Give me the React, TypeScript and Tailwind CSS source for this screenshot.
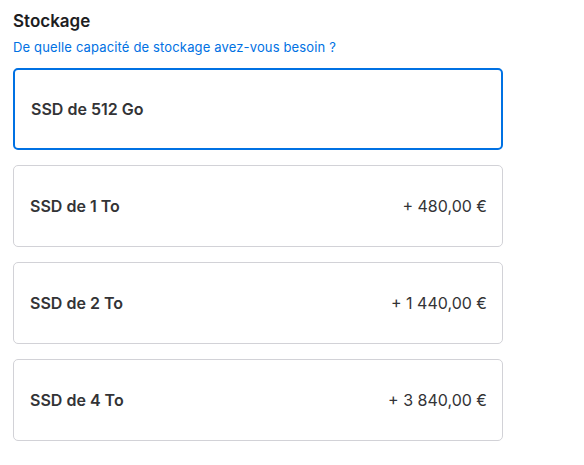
import React from 'react';

interface StorageOption {
  label: string;
  price?: string;
}

const options: StorageOption[] = [
  { label: 'SSD de 512 Go' },
  { label: 'SSD de 1 To', price: '+ 480,00 €' },
  { label: 'SSD de 2 To', price: '+ 1 440,00 €' },
  { label: 'SSD de 4 To', price: '+ 3 840,00 €' },
];

const App: React.FC = () => {
  const selected = 0;

  return (
    <div className="min-h-[465px] w-[584px] bg-white pl-[13px] pt-[10px] font-['Inter','Liberation_Sans',sans-serif] text-[#333336]">
      {/* Header */}
      <h2 className="text-[17px] leading-[22px] font-semibold text-[#1d1d1f]">Stockage</h2>
      <p className="mt-[7px] text-[13px] leading-[16px] tracking-[0.15px] text-[#0071e3]">
        De quelle capacité de stockage avez-vous besoin ?
      </p>

      {/* Options */}
      <div className="mt-[13px] flex w-[490px] flex-col gap-[15px]">
        {options.map((opt, i) => (
          <button
            key={opt.label}
            type="button"
            className={`flex h-[82px] items-center justify-between rounded-[5px] pl-[16px] pr-[15px] text-left ${
              i === selected ? 'border-2 border-[#0071e3] pl-[15px] pr-[14px]' : 'border border-[#d2d2d7]'
            }`}
          >
            <span className="text-[16px] font-semibold text-[#333336]">{opt.label}</span>
            {opt.price && <span className="text-[16px] text-[#333336]">{opt.price}</span>}
          </button>
        ))}
      </div>
    </div>
  );
};

export default App;
